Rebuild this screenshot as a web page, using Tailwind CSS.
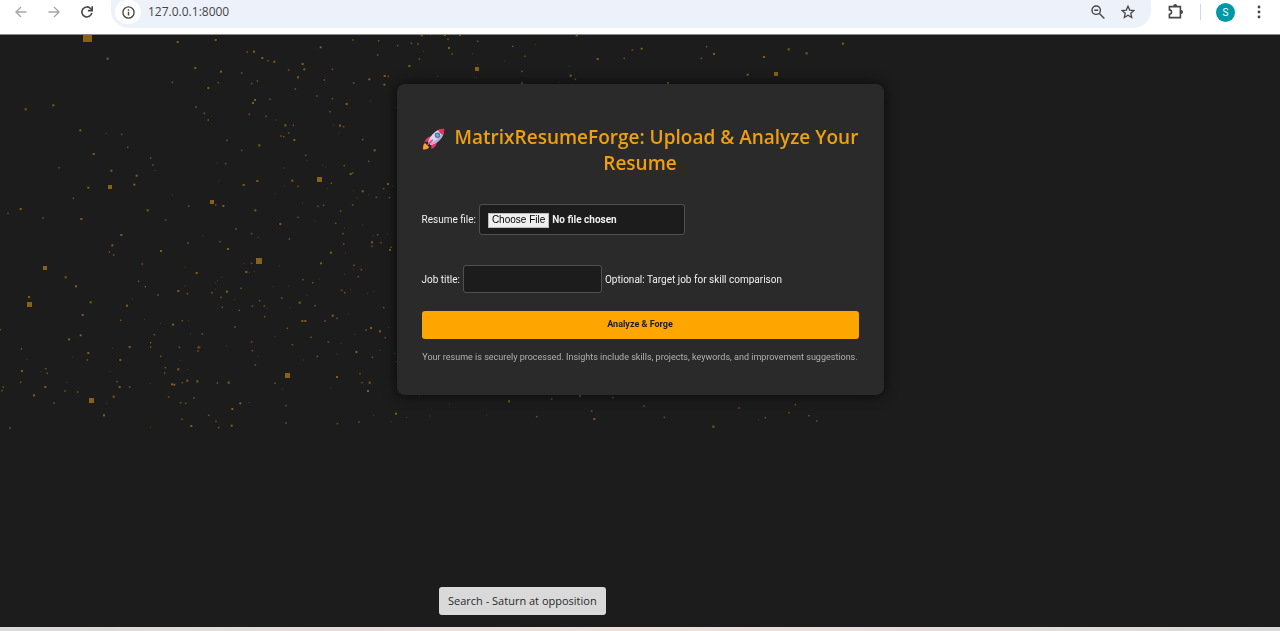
<!DOCTYPE html>
<html lang="en">
<head>
<meta charset="utf-8">
<meta name="viewport" content="width=device-width, initial-scale=1">
<title>MatrixResumeForge</title>
<script src="https://cdn.jsdelivr.net/npm/@tailwindcss/browser@4"></script>
</head>
<body class="flex min-h-screen flex-col bg-[#1c1c1c] font-['Open_Sans','Noto_Sans',sans-serif] text-[#f0f0f0]">

<header class="flex h-[35px] items-start border-b border-[#8a8a8a] bg-white pl-2 text-[#474747]">
  <nav class="flex h-6 items-center gap-[7px]" aria-label="Browser">
    <button type="button" aria-label="Back" class="flex size-[26px] items-center justify-center text-[#a6a6a6]">
      <svg class="size-3" viewBox="0 0 12 12" fill="none" stroke="currentColor" stroke-width="1.4"><path d="M11.5 6H1M6 1 1 6l5 5"/></svg>
    </button>
    <button type="button" aria-label="Forward" class="flex size-[26px] items-center justify-center text-[#a6a6a6]">
      <svg class="size-3" viewBox="0 0 12 12" fill="none" stroke="currentColor" stroke-width="1.4"><path d="M.5 6H11M6 1l5 5-5 5"/></svg>
    </button>
    <button type="button" aria-label="Reload" class="flex size-[26px] items-center justify-center">
      <svg class="size-3" viewBox="0 0 12 12" fill="none" stroke="currentColor" stroke-width="1.6"><path d="M10.8 6.8A5 5 0 1 1 9.7 2.7L11 4"/><path d="M11.2.3v4.3H6.9"/></svg>
    </button>
  </nav>
  <div class="ml-[11px] flex h-7 flex-1 items-start rounded-b-[18px] bg-[#edf1fa] pl-1">
    <button type="button" aria-label="Site information" class="flex h-6 w-[26px] items-center justify-center rounded-full bg-white">
      <svg class="size-[13px]" viewBox="0 0 13 13" fill="none" stroke="currentColor" stroke-width="1.4"><circle cx="6.5" cy="6.5" r="5.6"/><path d="M6.500 5.800v3.700M6.500 3.300v1.500"/></svg>
    </button>
    <label class="flex h-6 flex-1 items-center pl-[7px]"><span class="sr-only">Address</span>
      <input type="text" value="127.0.0.1:8000" class="w-full bg-transparent text-xs text-[#454545] outline-none">
    </label>
    <button type="button" aria-label="Zoom" class="flex h-6 w-[30px] items-center justify-center">
      <svg class="size-[14px]" viewBox="0 0 14 14" fill="none" stroke="currentColor" stroke-width="1.4"><circle cx="5.2" cy="5.2" r="4.2"/><path d="M3.2 5.2h4M8.4 8.4l5 5"/></svg>
    </button>
    <button type="button" aria-label="Bookmark" class="mr-2 flex h-6 w-[30px] items-center justify-center">
      <svg class="size-[14px]" viewBox="0 0 14 14" fill="none" stroke="currentColor" stroke-width="1.3"><path d="m7 1.2 1.7 3.9 4.3.4-3.2 2.8.9 4.2L7 10.300l-3.700 2.200.9-4.200L1 5.500l4.300-.4z"/></svg>
    </button>
  </div>
  <div class="flex h-6 items-center pr-3 pl-4">
    <button type="button" aria-label="Extensions" class="flex size-[18px] items-center justify-center">
      <svg class="size-4" viewBox="0 0 16 16" fill="none" stroke="currentColor" stroke-width="1.6"><path d="M1.4 2.6h11v11h-11v-3.300c2.800 0 2.800-4.400 0-4.400z"/><path fill="currentColor" stroke="none" d="M5.200 2a2 2 0 0 1 4 0zM13 6.100a2 2 0 0 1 0 4z"/></svg>
    </button>
    <span class="ml-[15px] h-4 w-px bg-[#c9d9f5]"></span>
    <button type="button" aria-label="Profile" class="ml-[15px] flex size-[19px] items-center justify-center rounded-full bg-[#0097a7] font-[Roboto,sans-serif] text-[10px] text-white">S</button>
    <button type="button" aria-label="Menu" class="ml-[15px] flex h-6 w-[18px] items-center justify-center">
      <svg class="h-[14px] w-1" viewBox="0 0 4 14" fill="currentColor"><circle cx="2" cy="2" r="1.4"/><circle cx="2" cy="7" r="1.4"/><circle cx="2" cy="12" r="1.4"/></svg>
    </button>
  </div>
</header>

<main class="relative flex-1 px-4 pt-[49px]">
  <canvas id="particles" width="900" height="400" class="absolute top-0 left-0" aria-hidden="true"></canvas>

  <section class="relative mx-auto max-w-[487px] rounded-lg bg-[#2a2a2a] px-[25px] pt-10 pb-8 shadow-[0_0_14px_rgba(0,0,0,0.7)]">
    <h1 class="text-center text-[19px] leading-[26px] font-semibold text-[#eea010]">
      <svg class="mr-1 inline-block h-[22px] w-6" viewBox="0 0 24 22" aria-hidden="true">
        <path fill="#ff9d2e" d="M3 15c-2 1-2 4-2 6.500 2.500 0 5.500-.5 6-2.500z"/>
        <path fill="#e8336d" d="M9 8.500C5.500 8.500 3.500 11 2.500 14l5-.5zM14.500 14c.5 3.500-2 5.500-5 7l-.5-5z"/>
        <path fill="#dcd6ea" d="M22 1c-6 0-10.500 3-14.500 9.500L6 14.500 9 17l4-1.500C19 12 22 7.500 22 1z"/>
        <path fill="#b9acd0" d="M22 1c0 6.500-3 11-9 14.500L9 17l-1.500-1.200C15 12.500 19 8 22 1z"/>
        <path fill="#e8304f" d="M22.300.7c-2.200 0-4.300.4-6.200 1.400 1 2.300 2.500 3.800 4.900 4.700.9-1.900 1.300-3.900 1.300-6.100z"/>
        <circle cx="15.500" cy="7.300" r="2.700" fill="#4d6a9d"/><circle cx="15.500" cy="7.300" r="1.700" fill="#64a5e0"/>
        <path fill="#f0477c" d="M10.500 11.200c-2.500 1.300-4.500 3.500-5.500 6 2.700-.8 5-2.500 6.300-5.200z"/>
      </svg>
      MatrixResumeForge: Upload &amp; Analyze Your Resume
    </h1>

    <form class="mt-7 font-[Roboto,sans-serif]" onsubmit="return false">
      <div class="flex items-center gap-[3px] text-[10px]">
        <label for="resume" class="whitespace-nowrap">Resume file:</label>
        <input id="resume" type="file" class="h-[31px] w-[206px] rounded-[3px] border border-[#505050] bg-[#1c1c1c] px-2 py-[7px] text-[10px] leading-[15px] font-bold file:mr-[3px] file:h-[15px] file:border file:border-[#bdbdbd] file:bg-[#efefef] file:px-[3px] file:font-['Liberation_Sans',Arial,sans-serif] file:text-[10px] file:leading-3 file:font-normal file:text-black">
      </div>
      <div class="mt-[30px] flex items-center gap-[3px] text-[10px]">
        <label for="job" class="whitespace-nowrap">Job title:</label>
        <input id="job" type="text" aria-describedby="job-hint" class="h-7 w-[139px] rounded-[3px] border border-[#505050] bg-[#1c1c1c] px-2">
        <span id="job-hint">Optional: Target job for skill comparison</span>
      </div>
      <button type="submit" class="mt-[18px] h-7 w-full rounded-[3px] bg-[#ffa500] text-[9px] font-bold text-[#1c1c1c]">Analyze &amp; Forge</button>
    </form>
    <p class="mt-3 text-center font-[Roboto,sans-serif] text-[9px] leading-3 text-[#b0b0b0]">Your resume is securely processed. Insights include skills, projects, keywords, and improvement suggestions.</p>
  </section>

  <div role="tooltip" class="absolute bottom-3 left-[439px] rounded-[3px] bg-[#d9d9d9] px-[9px] py-[5px] text-[11px] leading-[18px] text-[#2b2b2b]">Search - Saturn at opposition</div>
</main>
<footer class="h-1 bg-linear-to-r from-[#d9d9d9] via-[#eedfda] to-[#d9d9d9]"></footer>

<script>
  // Particle field in tiles: origin in px, then x, y, brightness triples in thirds of a pixel.
  // Brightness 1-3 is a faint to clear dot of 1-2px; 4 and up is a square of that many px.
  const tiles = [
    [0, -5, [263,22,9, 533,36,3, 323,86,3, 586,114,3, 517,157,2, 160,226,3, 77,238,3, 588,231,2, 241,301,3, 319,311,1, 365,313,2, 383,352,2, 281,372,3, 452,384,2, 459,405,2, 465,421,1, 177,413,2, 334,422,3, 410,437,3, 403,464,3, 330,471,4, 265,473,3, 220,505,2, 517,495,1, 566,528,2, 62,537,3, 24,550,2, 443,541,3, 129,564,2, 244,567,3, 497,570,2]],
    [200, -5, [47,30,3, 459,30,2, 536,32,2, 593,47,2, 362,52,3, 142,66,2, 162,65,3, 187,84,3, 204,92,2, 223,95,3, 533,75,2, 308,102,3, 313,118,3, 266,120,2, 397,118,2, 63,125,3, 125,129,2, 294,142,3, 373,150,2, 508,148,3, 554,138,3, 565,139,2, 553,164,3, 461,159,2, 172,153,2, 155,161,2, 55,158,2, 25,174,3, 286,177,2, 351,198,2, 397,206,2, 210,208,2, 165,210,3, 159,219,3, 440,222,3, 512,213,1, 585,232,1, 13,250,2, 25,270,2, 148,253,2, 198,259,2, 227,270,1, 390,245,2, 256,286,3, 280,286,2, 400,285,1, 420,287,3, 431,290,2, 417,309,1, 266,309,2, 243,318,2, 251,320,2, 283,330,3, 81,331,2, 178,346,3, 125,361,2, 488,329,2, 524,361,3, 317,376,2, 321,392,1, 506,394,2, 51,399,1, 77,401,2, 368,405,1, 378,411,1, 433,407,2, 253,414,1, 458,429,2, 452,432,3, 357,448,5, 277,452,3, 172,453,3, 57,453,1, 131,465,3, 294,469,2, 253,468,1, 394,460,2, 564,462,3, 577,468,1, 382,475,1, 551,476,2, 461,482,1, 488,484,3, 506,495,1, 470,503,1, 529,502,2, 568,503,2, 225,492,1, 36,516,4, 47,525,2, 70,528,3, 308,519,1, 354,529,2, 371,526,2, 458,525,2, 166,541,3, 422,543,2, 294,562,2, 345,574,1, 241,582,3, 407,580,2, 433,594,1, 488,585,1, 108,597,2]],
    [0, 195, [364,15,3, 564,39,2, 337,46,3, 328,66,2, 341,75,2, 483,63,3, 427,102,2, 555,112,1, 136,114,4, 197,142,3, 590,129,3, 416,154,2, 228,169,3, 436,170,2, 555,168,1, 535,183,3, 562,191,2, 474,195,2, 87,201,3, 89,222,5, 272,217,3, 397,207,1, 381,227,3, 248,255,3, 433,268,1, 362,271,2, 547,272,2, 566,272,1, 482,280,1, 519,284,3, 1,299,2, 571,310,1, 463,314,2, 242,316,3, 207,328,3, 452,338,2, 452,351,2, 389,351,3, 596,352,3, 594,363,2, 538,352,2, 337,355,1, 64,357,2, 265,369,3, 218,381,1, 482,379,2, 262,390,2, 361,390,3, 81,389,1, 541,392,1, 496,413,2, 535,418,3, 563,418,1, 137,416,2, 66,423,3, 122,425,1, 142,430,2, 330,424,1, 494,429,2, 351,455,2, 62,457,2, 201,458,1, 562,452,3, 592,454,3, 547,458,2, 450,461,1, 516,463,3, 523,464,3, 136,471,3, 359,471,3, 389,471,2, 10,471,2, 6,482,2, 195,483,2, 233,486,2, 102,496,3, 341,500,3, 506,501,2, 582,504,2, 274,510,5, 162,519,2, 319,520,1, 542,518,2, 557,520,2, 312,556,3, 546,568,2, 574,588,3, 30,594,2, 451,592,1]],
    [200, 195, [155,11,2, 8,17,1, 175,23,1, 268,27,2, 60,35,2, 429,11,2, 533,14,2, 520,17,1, 563,12,1, 516,37,3, 543,38,2, 431,42,2, 516,49,2, 573,52,2, 570,60,3, 84,57,3, 393,68,3, 436,69,1, 178,92,6, 132,101,1, 155,100,2, 363,100,3, 239,108,1, 462,106,2, 480,111,1, 461,118,1, 484,119,2, 139,126,3, 148,127,1, 163,125,1, 434,133,1, 475,140,2, 65,142,1, 52,151,1, 309,149,2, 357,147,1, 338,158,2, 47,159,1, 265,168,1, 219,170,1, 123,175,2, 46,178,1, 36,188,2, 81,185,3, 425,181,2, 434,188,2, 452,179,1, 521,184,1, 503,190,1, 321,195,1, 63,202,2, 245,204,2, 104,208,1, 179,212,2, 299,218,3, 157,228,2, 193,228,2, 345,227,2, 67,232,2, 52,236,1, 118,241,2, 202,235,1, 270,233,1, 551,233,2, 445,252,1, 398,257,3, 411,265,2, 194,260,2, 307,273,3, 316,273,3, 375,273,2, 105,291,2, 262,295,2, 513,294,3, 566,292,1, 498,300,2, 540,304,3, 7,312,2, 465,314,1, 556,323,2, 333,322,2, 225,320,1, 155,336,2, 385,336,2, 423,341,1, 277,344,2, 80,348,1, 1,352,1, 157,362,2, 540,361,1, 469,366,3, 411,372,1, 174,379,1, 352,379,2, 517,382,2, 310,390,1, 584,371,1, 588,395,1, 166,405,2, 262,435,5, 480,431,2, 411,441,3, 486,458,2, 509,458,3, 52,459,2, 86,458,3, 225,460,2, 391,474,1, 248,477,1, 504,483,3, 121,520,3, 147,518,1, 258,527,2, 97,537,3, 588,551,3, 26,556,2, 520,557,1, 48,574,2, 573,575,1, 258,579,2, 412,581,2, 477,576,2, 95,587,3, 56,593,2]],
    [400, -5, [65,16,3, 92,16,1, 134,15,3, 180,15,3, 530,16,3, 144,28,2, 34,40,2, 54,42,2, 233,34,2, 406,43,1, 338,49,2, 147,54,3, 156,72,2, 218,71,1, 70,64,1, 375,79,2, 58,87,2, 314,93,1, 28,108,3, 233,104,1, 232,118,4, 366,124,2, 112,140,1, 223,142,1, 230,143,1, 508,108,1, 512,137,3, 526,148,2, 477,157,1, 366,160,3, 593,87,3, 673,85,2, 697,60,2, 725,56,3, 804,159,3, 904,85,2, 920,50,2, 942,72,3, 1043,134,3, 1092,81,3, 1127,132,4, 1166,58,3, 1220,70,3, 1329,41,3]],
    [390, 205, [15,341,1, 18,365,1, 88,468,1, 178,492,1, 357,484,3, 485,477,2, 570,467,3, 669,473,2]],
    [400, 360, [20,68,1, 90,63,1, 260,60,1, 410,65,2, 575,48,2, 583,72,3]],
    [640, 205, [12,498,2, 73,532,2, 220,560,3, 297,504,2, 356,539,1, 376,533,2, 447,518,2, 466,494,2, 507,527,2, 530,543,2]]
  ];
  const ctx = document.getElementById('particles').getContext('2d');
  const dotSize = [0, 1, 1.5, 2];
  const alpha = [0, 0.3, 0.5, 0.58];
  for (const [ox, oy, dots] of tiles) {
    for (let i = 0; i < dots.length; i += 3) {
      const level = dots[i + 2];
      const x = ox + dots[i] / 3;
      const y = oy + dots[i + 1] / 3;
      if (level >= 4) {
        ctx.fillStyle = 'rgba(205, 140, 20, 0.62)';
        ctx.fillRect(Math.round(x - level / 2), Math.round(y - level / 2), level, level);
      } else {
        ctx.fillStyle = `rgba(205, 140, 20, ${alpha[level]})`;
        ctx.fillRect(x - dotSize[level] / 2, y - dotSize[level] / 2, dotSize[level], dotSize[level]);
      }
    }
  }
</script>
</body>
</html>
